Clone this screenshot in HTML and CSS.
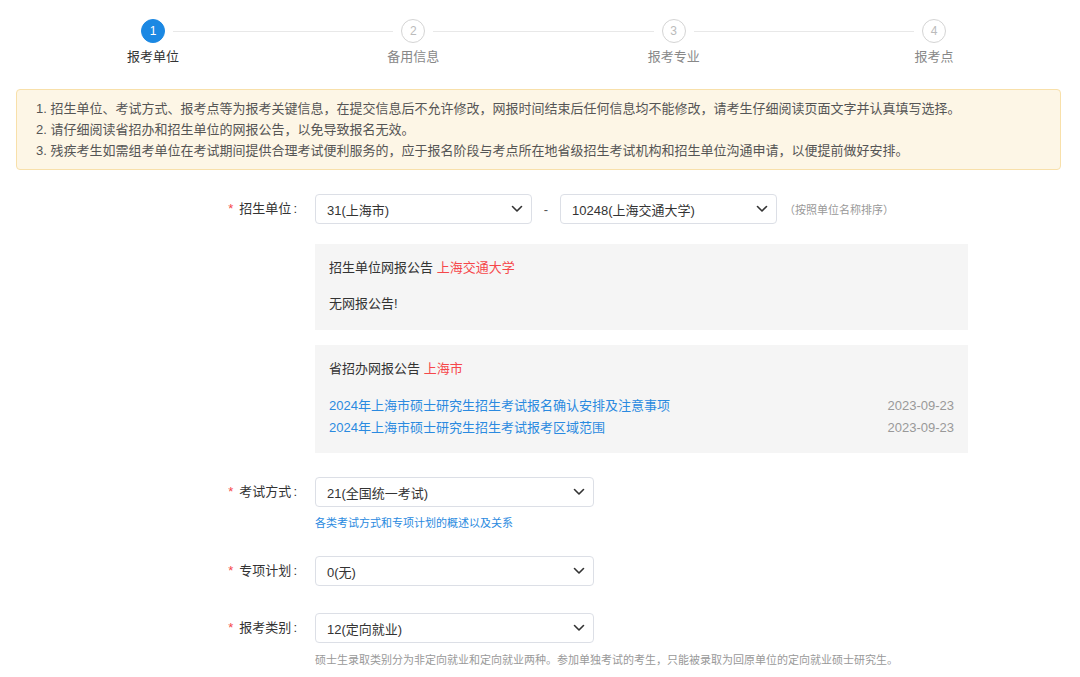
FILE: index.html
```html
<!DOCTYPE html>
<html lang="zh-CN">
<head>
<meta charset="utf-8">
<title>报考单位</title>
<link rel="stylesheet" href="styles.css">
</head>
<body>
<div class="page">
  <div class="steps">
    <div class="step active"><div class="circle">1</div><div class="step-label">报考单位</div></div>
    <div class="step-line"></div>
    <div class="step"><div class="circle">2</div><div class="step-label">备用信息</div></div>
    <div class="step-line"></div>
    <div class="step"><div class="circle">3</div><div class="step-label">报考专业</div></div>
    <div class="step-line"></div>
    <div class="step"><div class="circle">4</div><div class="step-label">报考点</div></div>
  </div>

  <div class="notice">
    <p>1. 招生单位、考试方式、报考点等为报考关键信息，在提交信息后不允许修改，网报时间结束后任何信息均不能修改，请考生仔细阅读页面文字并认真填写选择。</p>
    <p>2. 请仔细阅读省招办和招生单位的网报公告，以免导致报名无效。</p>
    <p>3. 残疾考生如需组考单位在考试期间提供合理考试便利服务的，应于报名阶段与考点所在地省级招生考试机构和招生单位沟通申请，以便提前做好安排。</p>
  </div>

  <div class="form">
    <div class="row row-unit">
      <div class="label"><span class="req">*</span>招生单位<span class="colon">:</span></div>
      <div class="field">
        <div class="inline">
          <div class="select sm"><span>31(上海市)</span><svg class="chev" viewBox="0 0 12 8" width="12" height="8"><path d="M1.5 1.5 L6 6 L10.5 1.5" fill="none" stroke="#333" stroke-width="1.6" stroke-linecap="round" stroke-linejoin="round"/></svg></div>
          <span class="dash">-</span>
          <div class="select sm"><span>10248(上海交通大学)</span><svg class="chev" viewBox="0 0 12 8" width="12" height="8"><path d="M1.5 1.5 L6 6 L10.5 1.5" fill="none" stroke="#333" stroke-width="1.6" stroke-linecap="round" stroke-linejoin="round"/></svg></div>
          <span class="side-hint">（按照单位名称排序）</span>
        </div>
        <div class="ann ann-unit">
          <div class="ann-title">招生单位网报公告 <span class="red">上海交通大学</span></div>
          <div class="ann-body">无网报公告!</div>
        </div>
        <div class="ann ann-prov">
          <div class="ann-title">省招办网报公告 <span class="red">上海市</span></div>
          <ul class="ann-list">
            <li><span class="link">2024年上海市硕士研究生招生考试报名确认安排及注意事项</span><span class="date">2023-09-23</span></li>
            <li><span class="link">2024年上海市硕士研究生招生考试报考区域范围</span><span class="date">2023-09-23</span></li>
          </ul>
        </div>
      </div>
    </div>

    <div class="row row-mode">
      <div class="label"><span class="req">*</span>考试方式<span class="colon">:</span></div>
      <div class="field">
        <div class="select md"><span>21(全国统一考试)</span><svg class="chev" viewBox="0 0 12 8" width="12" height="8"><path d="M1.5 1.5 L6 6 L10.5 1.5" fill="none" stroke="#333" stroke-width="1.6" stroke-linecap="round" stroke-linejoin="round"/></svg></div>
        <div class="hint link-hint">各类考试方式和专项计划的概述以及关系</div>
      </div>
    </div>

    <div class="row row-plan">
      <div class="label"><span class="req">*</span>专项计划<span class="colon">:</span></div>
      <div class="field">
        <div class="select md"><span>0(无)</span><svg class="chev" viewBox="0 0 12 8" width="12" height="8"><path d="M1.5 1.5 L6 6 L10.5 1.5" fill="none" stroke="#333" stroke-width="1.6" stroke-linecap="round" stroke-linejoin="round"/></svg></div>
      </div>
    </div>

    <div class="row row-type">
      <div class="label"><span class="req">*</span>报考类别<span class="colon">:</span></div>
      <div class="field">
        <div class="select md"><span>12(定向就业)</span><svg class="chev" viewBox="0 0 12 8" width="12" height="8"><path d="M1.5 1.5 L6 6 L10.5 1.5" fill="none" stroke="#333" stroke-width="1.6" stroke-linecap="round" stroke-linejoin="round"/></svg></div>
        <div class="hint grey-hint">硕士生录取类别分为非定向就业和定向就业两种。参加单独考试的考生，只能被录取为回原单位的定向就业硕士研究生。</div>
      </div>
    </div>
  </div>
</div>
</body>
</html>
```

FILE: styles.css
```css
* { box-sizing: border-box; }
html, body { margin: 0; padding: 0; background: #fff; }
body {
  font-family: "Liberation Sans", "Noto Sans CJK SC", sans-serif;
  font-size: 13px;
  color: #333;
}
p, ul { margin: 0; padding: 0; }
ul { list-style: none; }

.page { width: 1080px; height: 677px; overflow: hidden; }

/* steps */
.steps {
  display: flex;
  align-items: flex-start;
  padding-top: 19px;
  margin-left: 141px;
  width: 805px;
}
.step {
  width: 24px;
  display: flex;
  flex-direction: column;
  align-items: center;
  flex: none;
}
.circle {
  width: 24px;
  height: 24px;
  border-radius: 50%;
  border: 1px solid #d4d4d4;
  color: #bbb;
  font-size: 12px;
  line-height: 22px;
  text-align: center;
  background: #fff;
}
.step.active .circle {
  background: #1b88e3;
  border-color: #1b88e3;
  color: #fff;
}
.step-label {
  white-space: nowrap;
  margin-top: 5px;
  font-size: 13px;
  line-height: 18px;
  color: #888;
}
.step.active .step-label { color: #333; }
.step-line {
  flex: 1;
  height: 1px;
  background: #e8e8e8;
  margin: 12px 8px 0;
}

/* notice */
.notice {
  margin: 23px 19px 0 16px;
  background: #fdf6e6;
  border: 1px solid #f8e0aa;
  border-radius: 4px;
  padding: 8px 19px;
  color: #555;
  font-size: 13px;
  line-height: 21px;
}

/* form */
.form { margin-left: 16px; }
.row { display: flex; align-items: flex-start; }
.row-unit { margin-top: 24px; }
.row-mode { margin-top: 24px; }
.row-plan { margin-top: 25px; }
.row-type { margin-top: 27px; }
.label {
  width: 284px;
  text-align: right;
  line-height: 30px;
  font-size: 13px;
  color: #333;
}
.req { color: #f5474a; margin-right: 6px; }
.colon { margin-left: 2px; margin-right: 3px; }
.field { margin-left: 15px; }
.inline { display: flex; align-items: center; }

.select {
  height: 30px;
  border: 1px solid #dcdfe6;
  border-radius: 4px;
  background: #fff;
  display: flex;
  align-items: center;
  justify-content: space-between;
  padding: 0 8px 0 11px;
  font-size: 13px;
  color: #333;
}
.select.sm { width: 217px; }
.select.md { width: 279px; }
.chev { display: block; flex: none; }

.dash { width: 28px; text-align: center; color: #555; }
.side-hint { margin-left: 7px; font-size: 11px; color: #999; }

.ann {
  width: 653px;
  background: #f5f5f5;
  padding: 14px 14px 16px;
  font-size: 13px;
  line-height: 20px;
}
.ann-unit { margin-top: 20px; }
.ann-prov { margin-top: 15px; padding-bottom: 14px; }
.ann-title { color: #333; }
.red { color: #f5474a; }
.ann-body { margin-top: 16px; color: #333; }
.ann-list { margin-top: 16px; }
.ann-list li {
  display: flex;
  justify-content: space-between;
  line-height: 22px;
}
.link { color: #2a8ae0; }
.date { color: #999; }

.hint { font-size: 11px; line-height: 16px; }
.link-hint { margin-top: 8px; color: #2a8ae0; }
.grey-hint { margin-top: 9px; color: #999; white-space: nowrap; }
```
